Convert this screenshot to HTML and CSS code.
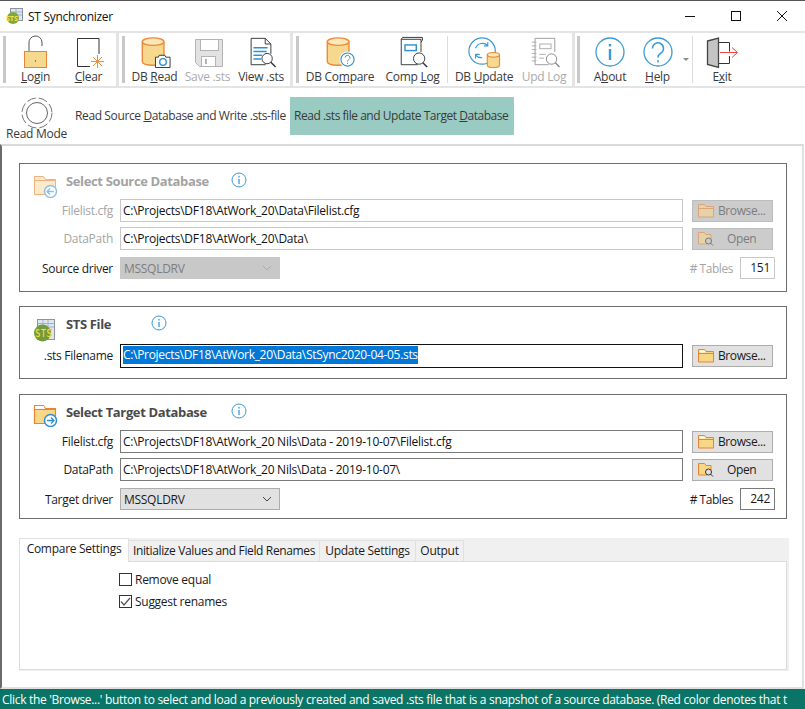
FILE: index.html
```html
<!DOCTYPE html>
<html lang="en">
<head>
  <meta charset="UTF-8">
  <title>ST Synchronizer</title>
  <link rel="stylesheet" href="styles.css">
</head>
<body>
<div class="window">
  <div class="titlebar">
    <svg class="app-icon" width="18" height="18" viewBox="0 0 18 18">
      <rect x="4.500" y="1.500" width="12" height="12" fill="#dfe6ee" stroke="#8a94a0"/>
      <path d="M5 5h11M5 8h11M10 2v11" stroke="#9fb3c8"/>
      <circle cx="7" cy="11" r="6" fill="#7fa83e"/>
      <text x="0" y="14" class="app-icon-text">STS</text>
    </svg>
    <span class="app-name">ST Synchronizer</span>
    <div class="win-buttons">
      <svg width="12" height="12" viewBox="0 0 12 12"><path d="M1 6.500h10" stroke="#111" fill="none"/></svg>
      <svg width="12" height="12" viewBox="0 0 12 12"><rect x="1.500" y="1.500" width="9" height="9" stroke="#111" fill="none"/></svg>
      <svg width="12" height="12" viewBox="0 0 12 12"><path d="M1 1l10 10M11 1L1 11" stroke="#111" fill="none"/></svg>
    </div>
  </div>

  <div class="toolbar">
    <div class="band band-1">
      <div class="grip"></div>
      <div class="tool tool-53">
        <svg width="36" height="32" viewBox="0 0 36 32"><path d="M11 15V7a6.500 6.500 0 0 1 13-1v4" fill="none" stroke="#555"/><rect x="6.500" y="15.500" width="22" height="16" fill="#f6d98f" stroke="#e8843a"/><path d="M17.500 24v2" stroke="#d9601f"/></svg>
        <span><u>L</u>ogin</span>
      </div>
      <div class="tool tool-53">
        <svg width="36" height="32" viewBox="0 0 36 32"><path d="M19 30.500H6.500V2.500h21.500V18" fill="#fff" stroke="#333"/><path d="M26.500 19v13M20 25.500h13M22 21l9 9M31 21l-9 9" stroke="#f0913a"/></svg>
        <span><u>C</u>lear</span>
      </div>
    </div>
    <div class="band band-2">
      <div class="grip"></div>
      <div class="tool tool-53">
        <svg width="36" height="34" viewBox="0 0 36 34"><path d="M4.500 6v21c0 2.500 5 4 11.500 4s11.500-1.500 11.500-4V6" fill="#f6d98f" stroke="#ec8a3c" stroke-width="1.500"/><ellipse cx="16" cy="6" rx="11.500" ry="4" fill="#fbe8b8" stroke="#ec8a3c" stroke-width="1.500"/><path d="M18.500 22.500h3l1-2h6l1 2h4.500v11h-15.500z" fill="#fff" stroke="#333"/><circle cx="26.500" cy="27.500" r="3.500" fill="#fff" stroke="#2f8fd0" stroke-width="1.500"/></svg>
        <span>DB <u>R</u>ead</span>
      </div>
      <div class="tool tool-53 is-off">
        <svg width="36" height="32" viewBox="0 0 36 32"><path d="M5.500 3.500h27v27h-23l-4-4z" fill="#e2e2e2" stroke="#b3b3b3"/><rect x="10.500" y="3.500" width="18" height="11" fill="#fff" stroke="#b3b3b3"/><rect x="11.500" y="20.500" width="14" height="10" fill="#fff" stroke="#b3b3b3"/><rect x="15" y="23" width="2" height="5" fill="#b3b3b3"/></svg>
        <span>Save .sts</span>
      </div>
      <div class="tool tool-54">
        <svg width="36" height="34" viewBox="0 0 36 34"><path d="M23 30.500H7.500v-28h15l6 6V19" fill="#fff" stroke="#333"/><path d="M22.500 2.500v6h6" fill="none" stroke="#333"/><path d="M10 12.500h15M10 16.500h14M10 20.500h9M10 24.500h8" stroke="#2f8fd0" stroke-width="1.500"/><circle cx="24.500" cy="24" r="5.500" fill="#fff" stroke="#333"/><path d="M28.500 28l5 5" stroke="#333" stroke-width="1.500"/></svg>
        <span>View .sts</span>
      </div>
    </div>
    <div class="band band-3">
      <div class="grip"></div>
      <div class="tool tool-76">
        <svg width="36" height="34" viewBox="0 0 36 34"><path d="M4.500 6v21c0 2.500 5 4 11.500 4s11.500-1.500 11.500-4V6" fill="#f6d98f" stroke="#ec8a3c" stroke-width="1.500"/><ellipse cx="16" cy="6" rx="11.500" ry="4" fill="#fbe8b8" stroke="#ec8a3c" stroke-width="1.500"/><circle cx="26" cy="25" r="8.500" fill="#fff"/><circle cx="26" cy="25" r="7" fill="#fff" stroke="#2f8fd0" stroke-width="1.200"/><path d="M23.500 23a2.500 2.500 0 1 1 3.700 2.200c-.9.500-1.200 1-1.200 2M26 28.500v1.200" fill="none" stroke="#2f8fd0"/></svg>
        <span>DB Co<u>m</u>pare</span>
      </div>
      <div class="tool tool-69">
        <svg width="36" height="34" viewBox="0 0 36 34"><path d="M23 30.500H5.500v-27h21V17" fill="#fff" stroke="#333"/><path d="M5.500 3.500l1.500-2h21v3l-1.500 2" fill="none" stroke="#333"/><rect x="9.500" y="9.500" width="12" height="6" fill="#fff" stroke="#2f8fd0" stroke-width="1.500"/><circle cx="24.500" cy="24" r="6" fill="#fff" stroke="#333"/><path d="M28.500 28.500l4.500 4.500" stroke="#333" stroke-width="1.500"/></svg>
        <span>Comp <u>L</u>og</span>
      </div>
      <div class="tool-sep"></div>
      <div class="tool tool-72">
        <svg width="36" height="34" viewBox="0 0 36 34"><circle cx="16" cy="16" r="14" fill="#fff" stroke="#3b9ad6" stroke-width="1.300"/><path d="M9 13a8 8 0 0 1 13-3M22 6.500V10.500h-4M16 23a8 8 0 0 1-7-3M9 24v-4.500h4.500" fill="none" stroke="#3b9ad6" stroke-width="1.200"/><path d="M21.500 20v11c0 1.500 2.500 2.500 6.500 2.500s6.500-1 6.500-2.500V20" fill="#f6d98f" stroke="#ec8a3c" stroke-width="1.200"/><ellipse cx="28" cy="20" rx="6.500" ry="2.500" fill="#fbe8b8" stroke="#ec8a3c" stroke-width="1.200"/></svg>
        <span>DB <u>U</u>pdate</span>
      </div>
      <div class="tool tool-48 is-off">
        <svg width="36" height="34" viewBox="0 0 36 34"><path d="M23 30.500H8.500v-28h21V17" fill="#fff" stroke="#999"/><path d="M5 6.500h5M5 10.500h5M5 14.500h5M5 18.500h5M5 22.500h5M5 26.500h5" stroke="#aaa"/><rect x="13.500" y="8.500" width="12" height="5" fill="#fff" stroke="#aaa"/><path d="M13 19.500h7M13 23.500h5" stroke="#aaa"/><circle cx="26" cy="24.500" r="5.500" fill="#fff" stroke="#888"/><path d="M30 28.500l4.500 4.500" stroke="#888" stroke-width="1.500"/></svg>
        <span>Upd Log</span>
      </div>
    </div>
    <div class="band band-4">
      <div class="grip"></div>
      <div class="tool tool-50">
        <svg width="36" height="32" viewBox="0 0 36 32"><circle cx="18" cy="16" r="14" fill="#fff" stroke="#3b9ad6" stroke-width="1.300"/><rect x="16.800" y="13" width="2.400" height="11" fill="#3b9ad6"/><rect x="16.800" y="8" width="2.400" height="2.400" fill="#3b9ad6"/></svg>
        <span>A<u>b</u>out</span>
      </div>
      <div class="tool tool-45">
        <svg width="36" height="32" viewBox="0 0 36 32"><circle cx="18" cy="16" r="14" fill="#fff" stroke="#3b9ad6" stroke-width="1.300"/><path d="M12.500 12.500a5.500 5.500 0 1 1 8.500 4.500c-2 1.300-3 2-3 4.500M18 24v2.500" fill="none" stroke="#3b9ad6" stroke-width="1.500"/></svg>
        <span><u>H</u>elp</span>
      </div>
      <div class="tool-arrow"></div>
      <div class="tool-sep"></div>
      <div class="tool tool-58">
        <svg width="36" height="32" viewBox="0 0 36 32"><path d="M15 6.500h10.500v9M25.500 20v7.500H15" fill="none" stroke="#333"/><path d="M3.500 5l11-3v29.500l-11-3z" fill="#c4c4c4" stroke="#444" stroke-width="1.300"/><path d="M16 16.500h17M28 11.500l5.500 5-5.500 5" fill="none" stroke="#f04343"/></svg>
        <span>E<u>x</u>it</span>
      </div>
    </div>
  </div>

  <div class="modebar">
    <div class="mode-toggle">
      <svg width="32" height="32" viewBox="0 0 32 32"><circle cx="16" cy="16" r="10.500" fill="#fff" stroke="#666"/><circle cx="16" cy="16" r="15" fill="none" stroke="#777" stroke-dasharray="9 3"/></svg>
      <span>Read Mode</span>
    </div>
    <div class="mode-tab">Read Source <u>D</u>atabase and Write .sts-file</div>
    <div class="mode-tab mode-active">Read .sts file and Update Target <u>D</u>atabase</div>
  </div>

  <div class="main">
    <div class="group group-source is-dim">
      <div class="group-head">
        <svg class="head-icon" width="26" height="24" viewBox="0 0 26 24">
          <path d="M1.500 20.500V2.500h9l2 3h10v15z" fill="#fbeacb" stroke="#f0b27f"/>
          <path d="M1.500 6.500h21" stroke="#f0b27f"/>
          <circle cx="17.500" cy="17.500" r="6" fill="#fff" stroke="#8cc1e6" stroke-width="1.500"/>
          <path d="M21 17.500h-7M17 14.500l-3 3 3 3" fill="none" stroke="#8cc1e6" stroke-width="1.300"/>
        </svg>
        <span class="group-title title-source">Select Source Database</span>
        <svg class="info" width="16" height="16" viewBox="0 0 16 16"><circle cx="8" cy="8" r="7" fill="#fff" stroke="#3b9ad6"/><path d="M8 7v5M8 4v1.500" stroke="#3b9ad6" stroke-width="1.300"/></svg>
      </div>
      <div class="row">
        <label class="row-label faint">Filelist.cfg</label>
        <input class="field" type="text" value="C:\Projects\DF18\AtWork_20\Data\Filelist.cfg">
        <button class="browse off" type="button">
          <svg width="16" height="15" viewBox="0 0 16 15"><path d="M.5 14V1.500h6l1.500 2h7.500V14z" fill="#e5d3a8" stroke="#dda47c"/><path d="M.5 5.500h15" stroke="#dda47c"/></svg>
          Browse...
        </button>
      </div>
      <div class="row">
        <label class="row-label faint">DataPath</label>
        <input class="field" type="text" value="C:\Projects\DF18\AtWork_20\Data\">
        <button class="browse off" type="button">
          <svg width="16" height="15" viewBox="0 0 16 15"><path d="M.5 13V1.500h6l1.500 2h5V8H9v5z" fill="#e5d3a8" stroke="#dda47c"/><circle cx="10.500" cy="10" r="3" fill="#ccc" stroke="#777"/><path d="M12.500 12l2.500 2.500" stroke="#777"/></svg>
          <span class="open-text">Open</span>
        </button>
      </div>
      <div class="row row-driver">
        <label class="row-label">Source driver</label>
        <div class="driver off">MSSQLDRV
          <svg width="10" height="6" viewBox="0 0 10 6"><path d="M1 1l4 4 4-4" fill="none" stroke="#a9a9a9"/></svg>
        </div>
        <span class="tables-label faint"># Tables</span>
        <div class="tables-box off-box">151</div>
      </div>
    </div>

    <div class="group group-sts">
      <div class="group-head">
        <svg class="head-icon" width="26" height="24" viewBox="0 0 26 24">
          <rect x="4.500" y="1.500" width="17" height="20" fill="#dfe6ee" stroke="#8a94a0"/>
          <path d="M4.500 5.500h17M5 9h16M10 2v6M15 2v6" stroke="#9fb3c8"/>
          <circle cx="9.500" cy="15" r="8.500" fill="#6f9c3c"/>
          <text x="2" y="19" class="sts-icon-text">STS</text>
        </svg>
        <span class="group-title title-sts">STS File</span>
        <svg class="info" width="16" height="16" viewBox="0 0 16 16"><circle cx="8" cy="8" r="7" fill="#fff" stroke="#3b9ad6"/><path d="M8 7v5M8 4v1.500" stroke="#3b9ad6" stroke-width="1.300"/></svg>
      </div>
      <div class="row">
        <label class="row-label">.sts Filename</label>
        <div class="field field-focus"><span class="selected">C:\Projects\DF18\AtWork_20\Data\StSync2020-04-05.sts</span></div>
        <button class="browse" type="button">
          <svg width="16" height="15" viewBox="0 0 16 15"><path d="M.5 14V1.500h6l1.500 2h7.500V14z" fill="#f8d888" stroke="#ea8433"/><path d="M.5 5.500h15" stroke="#ea8433"/><path d="M1.500 2.500h5l1 2h-6z" fill="#fff"/></svg>
          Browse...
        </button>
      </div>
    </div>

    <div class="group group-target">
      <div class="group-head">
        <svg class="head-icon" width="26" height="24" viewBox="0 0 26 24">
          <path d="M1.500 20.500V2.500h9l2 3h10v15z" fill="#f8d888" stroke="#ea8433" stroke-width="1.200"/>
          <path d="M2 3h8.500l1.500 3H2z" fill="#fff"/>
          <path d="M1.500 6.500h21" stroke="#ea8433"/>
          <circle cx="17.500" cy="17.500" r="6" fill="#fff" stroke="#2f8fd0" stroke-width="1.500"/>
          <path d="M14 17.500h7M18 14.500l3 3-3 3" fill="none" stroke="#2f8fd0" stroke-width="1.300"/>
        </svg>
        <span class="group-title title-target">Select Target Database</span>
        <svg class="info" width="16" height="16" viewBox="0 0 16 16"><circle cx="8" cy="8" r="7" fill="#fff" stroke="#3b9ad6"/><path d="M8 7v5M8 4v1.500" stroke="#3b9ad6" stroke-width="1.300"/></svg>
      </div>
      <div class="row">
        <label class="row-label">Filelist.cfg</label>
        <input class="field field-on" type="text" value="C:\Projects\DF18\AtWork_20 Nils\Data - 2019-10-07\Filelist.cfg">
        <button class="browse" type="button">
          <svg width="16" height="15" viewBox="0 0 16 15"><path d="M.5 14V1.500h6l1.500 2h7.500V14z" fill="#f8d888" stroke="#ea8433"/><path d="M.5 5.500h15" stroke="#ea8433"/><path d="M1.500 2.500h5l1 2h-6z" fill="#fff"/></svg>
          Browse...
        </button>
      </div>
      <div class="row">
        <label class="row-label">DataPath</label>
        <input class="field field-on" type="text" value="C:\Projects\DF18\AtWork_20 Nils\Data - 2019-10-07\">
        <button class="browse" type="button">
          <svg width="16" height="15" viewBox="0 0 16 15"><path d="M.5 13V1.500h6l1.500 2h5V8H9v5z" fill="#f8d888" stroke="#ea8433"/><circle cx="10.500" cy="10" r="3" fill="#e1e1e1" stroke="#333"/><path d="M12.500 12l2.500 2.500" stroke="#333"/></svg>
          <span class="open-text">Open</span>
        </button>
      </div>
      <div class="row row-driver">
        <label class="row-label">Target driver</label>
        <div class="driver">MSSQLDRV
          <svg width="10" height="6" viewBox="0 0 10 6"><path d="M1 1l4 4 4-4" fill="none" stroke="#444"/></svg>
        </div>
        <span class="tables-label"># Tables</span>
        <div class="tables-box">242</div>
      </div>
    </div>

    <div class="tabs">
      <div class="tab-strip">
        <div class="tab tab-active">Compare Settings</div>
        <div class="tab tab-init">Initialize Values and Field Renames</div>
        <div class="tab tab-update">Update Settings</div>
        <div class="tab tab-output">Output</div>
      </div>
      <div class="tab-panel">
        <div class="check"><span class="box"></span>Remove equal</div>
        <div class="check"><span class="box"><svg width="13" height="13" viewBox="0 0 13 13"><path d="M2 6.500l3 3.500 6-7" fill="none" stroke="#555" stroke-width="1.200"/></svg></span>Suggest renames</div>
      </div>
    </div>
  </div>

  <div class="statusbar">Click the 'Browse...' button to select and load a previously created and saved .sts file that is a snapshot of a source database. (Red color denotes that t</div>
</div>
</body>
</html>
```

FILE: styles.css
```css
html, body {
  margin: 0;
  padding: 0;
}
body {
  font-family: "Open Sans", "Noto Sans", Arial, sans-serif;
  font-size: 12px;
  letter-spacing: -0.28px;
  color: #1a1a1a;
  background: #fff;
}
.window {
  width: 805px;
  height: 709px;
  display: flex;
  flex-direction: column;
  overflow: hidden;
  border-top: 1px solid #555;
  box-sizing: border-box;
}

/* title bar */
.titlebar {
  height: 30px;
  flex: none;
  display: flex;
  align-items: center;
  padding-left: 6px;
}
.app-name {
  margin-left: 4px;
  font-size: 12px;
  color: #111;
}
.app-icon-text {
  font-size: 7px;
  font-weight: 700;
  fill: #f4e04a;
  letter-spacing: 0;
}
.win-buttons {
  margin-left: auto;
  display: flex;
  gap: 34px;
  padding-right: 17px;
}

/* toolbar */
.toolbar {
  height: 57px;
  flex: none;
  display: flex;
  border-top: 2px solid #e4e4e4;
  border-bottom: 2px solid #e4e4e4;
  box-sizing: border-box;
}
.band {
  display: flex;
  border-right: 3px solid #e4e4e4;
  box-sizing: border-box;
  height: 100%;
  position: relative;
}
.band-1 { width: 119px; padding-left: 9px; }
.band-2 { width: 174px; padding-left: 9px; }
.band-3 { width: 282px; padding-left: 9px; }
.band-4 { width: 230px; padding-left: 10px; border-right: 0; }
.grip {
  position: absolute;
  left: 3px;
  top: 3px;
  bottom: 3px;
  width: 3px;
  background-image: radial-gradient(#c4c4c4 0.7px, transparent 0.8px);
  background-size: 2px 2px;
}
.band-4 .grip { left: 2px; }
.tool {
  display: flex;
  flex-direction: column;
  align-items: center;
  padding-top: 3px;
  box-sizing: border-box;
  color: #3a3a3a;
  white-space: nowrap;
}
.tool svg {
  height: 32px;
  flex: none;
  overflow: visible;
}
.tool span {
  margin-top: 1px;
  line-height: 15px;
}
.tool-45 { width: 45px; }
.tool-48 { width: 48px; }
.tool-50 { width: 50px; }
.tool-53 { width: 53px; }
.tool-54 { width: 54px; }
.tool-58 { width: 58px; }
.tool-69 { width: 69px; }
.tool-72 { width: 72px; }
.tool-76 { width: 76px; }
.is-off { color: #ababab; }
.tool-sep {
  width: 1px;
  margin: 3px 0 3px;
  background: #dcdcdc;
}
.tool-arrow {
  width: 12px;
  position: relative;
}
.tool-arrow::after {
  content: "";
  position: absolute;
  left: 3px;
  top: 25px;
  border: 3px solid transparent;
  border-top: 3px solid #8a8a8a;
}

/* read mode row */
.modebar {
  height: 56px;
  flex: none;
  display: flex;
  box-sizing: border-box;
  padding-top: 9px;
  align-items: flex-start;
}
.mode-toggle {
  width: 73px;
  display: flex;
  flex-direction: column;
  align-items: center;
  color: #3a3a3a;
  flex: none;
}
.mode-toggle span {
  margin-top: -3px;
  line-height: 16px;
}
.mode-tab {
  height: 38px;
  line-height: 38px;
  padding: 0 0 0 2px;
  width: 217px;
  box-sizing: border-box;
  color: #3a3a3a;
  white-space: nowrap;
  letter-spacing: -0.38px;
}
.mode-active {
  width: 224px;
  padding: 0 4px;
  background: #99cbc3;
  letter-spacing: -0.47px;
}

/* main area */
.main {
  flex: 1;
  min-height: 0;
  border-top: 2px solid #d9d9d9;
  border-left: 2px solid #6b6b6b;
  border-right: 2px solid #e0e0e0;
  border-bottom: 2px solid #e0e0e0;
  padding: 17px 0 0 17px;
  box-sizing: border-box;
  width: 804px;
}
.group {
  width: 768px;
  border: 1px solid #6e6e6e;
  box-sizing: border-box;
}
.group-source { height: 129px; }
.group-sts { height: 73px; margin-top: 14px; }
.group-target { height: 125px; margin-top: 15px; }
.group-head {
  display: flex;
  align-items: flex-start;
  padding-left: 13px;
  box-sizing: border-box;
}
.group-source .group-head { height: 35px; padding-top: 10px; }
.group-sts .group-head { height: 37px; padding-top: 11px; }
.group-target .group-head { height: 35px; padding-top: 8px; }
.head-icon { flex: none; }
.group-title {
  margin-left: 7px;
  font-weight: 700;
  font-size: 13px;
  letter-spacing: -0.36px;
  color: #4a4a4a;
  line-height: 16px;
}
.info { flex: none; }
.title-source { width: 165px; margin-top: -1px; color: #a3a3a3; }
.group-source .info { margin-top: -2px; }
.title-sts { width: 85px; margin-top: -2px; }
.group-sts .info { margin-top: -3px; }
.title-target { width: 165px; margin-top: 1px; }
.row {
  display: flex;
  align-items: center;
  margin-bottom: 5px;
  height: 23px;
}
.row-driver {
  margin-top: 7px;
  height: 22px;
}
.row-label {
  width: 93px;
  margin-right: 7px;
  text-align: right;
  flex: none;
  color: #1a1a1a;
  white-space: nowrap;
}
.faint { color: #a5a5a5; }
.field {
  width: 563px;
  height: 23px;
  box-sizing: border-box;
  border: 1px solid #c9c9c9;
  background: #fff;
  padding: 0 2px;
  font: inherit;
  letter-spacing: -0.25px;
  color: #111;
  outline: none;
  flex: none;
}
.field-on { border-color: #7a7a7a; }
.field-focus {
  height: 24px;
  border: 1px solid #111;
  line-height: 20px;
  white-space: nowrap;
  letter-spacing: -0.31px;
}
.selected {
  display: inline-block;
  background: #0078d7;
  color: #fff;
  line-height: 18px;
  height: 18px;
}
.browse {
  width: 81px;
  height: 22px;
  margin-left: 9px;
  box-sizing: border-box;
  border: 1px solid #adadad;
  background: #e1e1e1;
  font: inherit;
  letter-spacing: -0.4px;
  color: #1a1a1a;
  display: flex;
  align-items: center;
  padding: 0 0 0 5px;
  gap: 4px;
  flex: none;
}
.browse.off {
  background: #cccccc;
  border-color: #bdbdbd;
  color: #7d7d7d;
}
.open-text { margin-left: 9px; }
.driver {
  width: 160px;
  height: 22px;
  box-sizing: border-box;
  border: 1px solid #adadad;
  background: #e1e1e1;
  display: flex;
  align-items: center;
  justify-content: space-between;
  padding: 0 7px 0 3px;
  flex: none;
  color: #1a1a1a;
}
.driver.off {
  background: #c8c8c8;
  border-color: #c8c8c8;
  color: #7e7e7e;
}
.tables-label {
  margin-left: auto;
  margin-right: 7px;
  white-space: nowrap;
  letter-spacing: -0.45px;
}
.tables-box {
  width: 35px;
  height: 22px;
  line-height: 20px;
  box-sizing: border-box;
  border: 1px solid #7a7a7a;
  text-align: right;
  padding-right: 4px;
  margin-right: 11px;
  flex: none;
}
.off-box { border-color: #c9c9c9; }
.sts-icon-text {
  font-size: 10px;
  font-weight: 700;
  fill: #f2e23d;
  stroke: #3a3a20;
  stroke-width: 0.2px;
  letter-spacing: 0;
}

/* tabs */
.tabs {
  width: 770px;
  height: 133px;
  margin-top: 19px;
  background: #f0f0f0;
}
.tab-strip {
  display: flex;
  height: 23px;
  position: relative;
}
.tab {
  height: 21px;
  margin-top: 2px;
  box-sizing: border-box;
  line-height: 19px;
  text-align: center;
  border: 1px solid #e0e0e0;
  border-left: 0;
  border-bottom: 0;
  color: #1a1a1a;
  white-space: nowrap;
}
.tab-active {
  width: 110px;
  height: 24px;
  margin-top: 0;
  line-height: 20px;
  background: #fff;
  border-left: 1px solid #e0e0e0;
  position: relative;
  z-index: 1;
}
.tab-init { width: 191px; letter-spacing: -0.36px; }
.tab-update { width: 96px; }
.tab-output { width: 48px; }
.tab-panel {
  width: 768px;
  height: 109px;
  box-sizing: border-box;
  background: #fff;
  border: 1px solid #dcdcdc;
  padding: 10px 0 0 99px;
}
.check {
  display: flex;
  align-items: center;
  height: 14px;
  margin-bottom: 8px;
  color: #1a1a1a;
}
.box {
  width: 13px;
  height: 13px;
  box-sizing: border-box;
  border: 1px solid #333;
  background: #fff;
  margin-right: 3px;
  flex: none;
  display: flex;
}
.box svg { margin: -1px; }

/* status */
.statusbar {
  height: 20px;
  line-height: 21px;
  flex: none;
  background: #0a7566;
  color: #fff;
  padding-left: 2px;
  white-space: nowrap;
  overflow: hidden;
  letter-spacing: -0.31px;
}
```
